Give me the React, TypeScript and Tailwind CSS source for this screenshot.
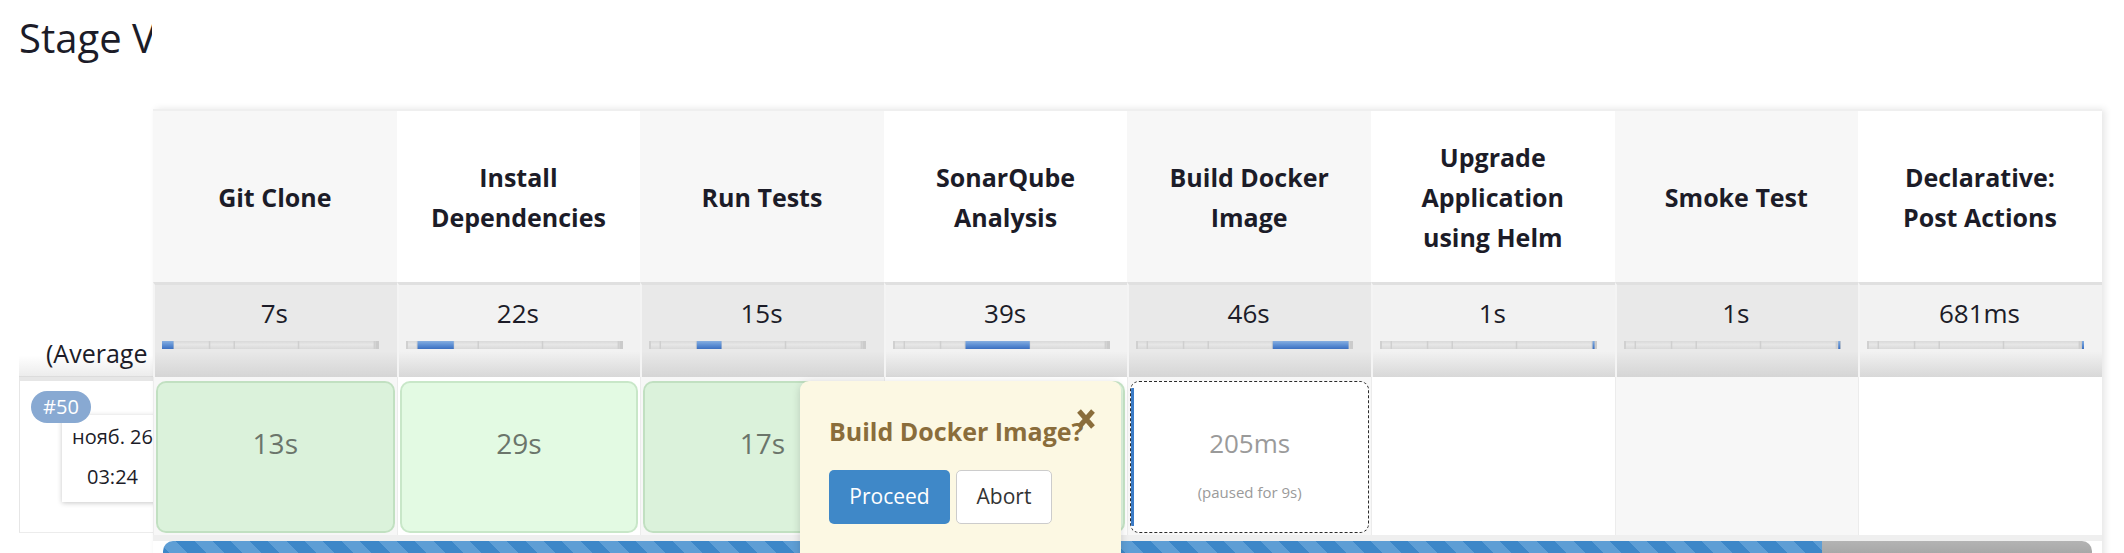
import React from 'react';

interface Stage {
  name: string[];
  avg: string;
  dur: number;
}

const stages: Stage[] = [
  { name: ['Git Clone'], avg: '7s', dur: 7 },
  { name: ['Install', 'Dependencies'], avg: '22s', dur: 22 },
  { name: ['Run Tests'], avg: '15s', dur: 15 },
  { name: ['SonarQube', 'Analysis'], avg: '39s', dur: 39 },
  { name: ['Build Docker', 'Image'], avg: '46s', dur: 46 },
  { name: ['Upgrade', 'Application', 'using Helm'], avg: '1s', dur: 1 },
  { name: ['Smoke Test'], avg: '1s', dur: 1 },
  { name: ['Declarative:', 'Post Actions'], avg: '681ms', dur: 0.681 },
];

const total = stages.reduce((s, st) => s + st.dur, 0);
const bounds = stages.reduce<number[]>((acc, st) => [...acc, (acc[acc.length - 1] ?? 0) + st.dur / total], []);

// average-time bar: whole run split into stage segments, current one in blue
const AvgBar: React.FC<{ idx: number }> = ({ idx }) => {
  const W = 217;
  const H = 8;
  const start = idx === 0 ? 0 : bounds[idx - 1];
  const end = bounds[idx];
  const bx = Math.min(start * W, W - 2);
  const bw = Math.max(2, (end - start) * W);
  return (
    <svg width={W} height={H} className="block">
      <defs>
        <linearGradient id={`gray${idx}`} x1="0" y1="0" x2="0" y2="1">
          <stop offset="0" stopColor="#d9d9d9" />
          <stop offset="0.45" stopColor="#e7e7e7" />
          <stop offset="1" stopColor="#d9d9d9" />
        </linearGradient>
        <linearGradient id={`blue${idx}`} x1="0" y1="0" x2="0" y2="1">
          <stop offset="0" stopColor="#86aee0" />
          <stop offset="0.5" stopColor="#5d8fd4" />
          <stop offset="1" stopColor="#3b6fc0" />
        </linearGradient>
      </defs>
      <rect width={W} height={H} fill={`url(#gray${idx})`} />
      <rect x="0" width="2" height={H} fill="#d0d0d0" />
      {bounds.slice(0, -1).map((b, i) => (
        <rect key={i} x={b * W - 1} width="1.5" height={H} fill="#cfcfcf" />
      ))}
      <rect x={W - 3} width="3" height={H} fill="#cbcbcb" />
      <rect x={bx} width={bw} height={H} fill={`url(#blue${idx})`} />
    </svg>
  );
};

const App: React.FC = () => {
  return (
    <div className="w-[2124px] h-[553px] overflow-hidden bg-white font-['Open_Sans','Noto_Sans',sans-serif] text-[#1c1c28]">
      <div className="pl-[19px] pt-[11px]">
        <h2 className="w-[133px] overflow-hidden whitespace-nowrap text-[40px] leading-[53px] font-normal">Stage View</h2>
      </div>

      <div className="mt-[45px] ml-[19px] flex items-start">
        {/* left column */}
        <div className="w-[134px] flex flex-col">
          <div className="h-[173px]" />
          <div className="h-[95px] overflow-hidden whitespace-nowrap flex items-end pl-[27px] pb-[6px] border-b border-[#dcdcdc] bg-[linear-gradient(to_bottom,#ffffff_0%,#ffffff_78%,#ececec_100%)]">
            <span className="text-[25px] leading-[33px]">(Average full run time: ~2min 11s)</span>
          </div>
          <div className="relative h-[156px] overflow-hidden border-l border-b border-t-4 border-l-[#e6e6e6] border-b-[#ececec] border-t-[#e6e6e6] bg-white">
            <div className="ml-[42px] mt-[34px] w-[101px] h-[87px] bg-white shadow-[0_1px_5px_rgba(0,0,0,0.22)] pt-[6px] text-center text-[20px] whitespace-nowrap">
              <div className="leading-[32px]">нояб. 26</div>
              <div className="mt-[8px] leading-[32px]">03:24</div>
            </div>
            <span className="absolute left-[11px] top-[10px] w-[60px] h-[32px] rounded-full bg-[#88a9d2] text-white text-[20px] leading-[32px] text-center">#50</span>
          </div>
        </div>

        {/* stage columns */}
        <div className="relative w-[1949px] flex flex-col shadow-[3px_0_7px_rgba(0,0,0,0.1)]">
          <div className="grid grid-cols-[repeat(8,243.6px)] h-[173px] border-t-2 border-[#efefef]">
            {stages.map((s, i) => (
              <div
                key={i}
                className={`flex flex-col items-center justify-center text-center font-bold text-[25px] leading-[40px] ${i % 2 === 0 ? 'bg-[#f7f7f7]' : 'bg-white'}`}
              >
                {s.name.map((l) => (
                  <span key={l}>{l}</span>
                ))}
              </div>
            ))}
          </div>

          <div className="grid grid-cols-[repeat(8,243.6px)] h-[95px]">
            {stages.map((s, i) => (
              <div
                key={i}
                className={`border-t-[3px] border-t-[#e0e0e0] border-l-2 border-l-[#f4f4f4] pt-[10px] pl-[7px] ${
                  i % 2 === 0
                    ? 'bg-[linear-gradient(to_bottom,#e9e9e9_0%,#e9e9e9_72%,#d5d5d5_100%)]'
                    : 'bg-[linear-gradient(to_bottom,#f2f2f2_0%,#f2f2f2_72%,#d8d8d8_100%)]'
                }`}
              >
                <div className="text-center pr-[10px] text-[26px] leading-[37px]">{s.avg}</div>
                <div className="mt-[9px]">
                  <AvgBar idx={i} />
                </div>
              </div>
            ))}
          </div>

          <div className="grid grid-cols-[repeat(8,243.6px)] h-[158px]">
            {['13s', '29s', '17s', '38s'].map((d, i) => (
              <div key={i} className={`pt-[4px] px-[2px] pb-[2px] border-l border-[#ececec] ${i % 2 === 0 ? 'bg-[#f7f7f7]' : 'bg-white'}`}>
                <div className="h-full rounded-[10px] border-2 border-[rgba(0,90,0,0.12)] bg-[rgba(0,210,0,0.11)] pt-[41px] text-center text-[28px] leading-[38px] text-[#6b756b]">
                  {d}
                </div>
              </div>
            ))}
            <div className="pt-[4px] px-[2px] pb-[2px] border-l border-[#ececec] bg-[#f7f7f7]">
              <div className="h-full flex rounded-[9px] border border-dashed border-[#2a2a2a] bg-white overflow-hidden">
                <div className="w-[3px] bg-[#3b7bc6] my-[6px]" />
                <div className="flex-1 pt-[43px] pr-[3px] text-center text-[#9a9a9a]">
                  <div className="text-[26px] leading-[37px]">205ms</div>
                  <div className="mt-[20px] text-[15px] leading-[20px]">(paused for 9s)</div>
                </div>
              </div>
            </div>
            <div className="border-l border-[#ececec] bg-white" />
            <div className="border-l border-[#ececec] bg-[#f7f7f7]" />
            <div className="border-l border-[#ececec] bg-white" />
          </div>

          <div className="h-[6px] bg-[#efefef]" />
          <div className="px-[10px]">
            <div className="flex h-[24px] rounded-t-[10px] overflow-hidden">
              <div className="w-[1659px] bg-[repeating-linear-gradient(45deg,#3d87c8_0px,#3d87c8_13px,#5e9ed5_13px,#5e9ed5_26px)]" />
              <div className="flex-1 bg-[linear-gradient(to_bottom,#b3b3b3,#9d9d9d)]" />
            </div>
          </div>

          {/* input prompt popover */}
          <div className="absolute left-[647px] top-[272px] w-[321px] h-[210px] rounded-[9px] bg-[#fcf8e3] shadow-[0_2px_8px_rgba(0,0,0,0.16)] pl-[29px] pt-[33px]">
            <div className="text-[25px] leading-[34px] font-bold text-[#8a6d3b] whitespace-nowrap">Build Docker Image?</div>
            <svg className="absolute right-[25px] top-[27px]" width="20" height="22" viewBox="0 0 20 22">
              <path d="M3 3 L17 19 M17 3 L3 19" stroke="#8a6d3b" strokeWidth="5" fill="none" />
            </svg>
            <div className="mt-[22px] flex gap-[6px]">
              <button className="w-[121px] h-[54px] rounded-[5px] bg-[#3f88c8] text-white text-[21px]">Proceed</button>
              <button className="w-[96px] h-[54px] rounded-[5px] bg-white border border-[#cccccc] text-[#333333] text-[21px]">Abort</button>
            </div>
          </div>
        </div>
      </div>
    </div>
  );
};

export default App;
